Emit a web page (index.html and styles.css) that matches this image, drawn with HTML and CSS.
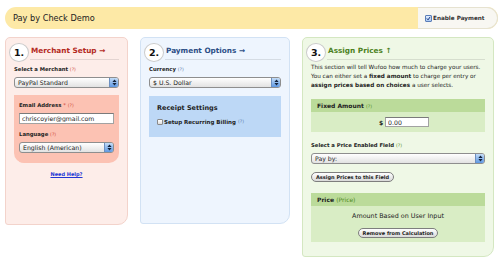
FILE: index.html
```html
<!DOCTYPE html>
<html lang="en">
<head>
    <meta charset="UTF-8">
    <title>Pay by Check Demo</title>
    <link rel="stylesheet" href="styles.css">
</head>
<body>
    <div class="topbar">
        <div class="topbar-title">Pay by Check Demo</div>
        <label class="topbar-toggle">
            <span class="check check-on"><svg viewBox="0 0 7 7"><path d="M1.2 3.5 L2.9 5.4 L5.9 1.1" /></svg></span>
            Enable Payment
        </label>
    </div>

    <div class="steps">
        <!-- step 1 -->
        <div class="panel panel-merchant">
            <div class="panel-head">
                <span class="badge">1.</span>
                <h2 class="panel-title">Merchant Setup →</h2>
            </div>
            <label class="field-label">Select a Merchant <span class="help">(?)</span></label>
            <div class="select">
                <span class="select-value">PayPal Standard</span>
                <span class="select-arrow"><svg viewBox="0 0 9 9"><path d="M4.5 1.4 L6.6 3.9 L2.4 3.9 Z M2.4 5.1 L6.6 5.1 L4.5 7.6 Z" /></svg></span>
            </div>
            <div class="subbox">
                <label class="field-label">Email Address <span class="req">*</span> <span class="help">(?)</span></label>
                <input class="input" type="text" value="chriscoyier@gmail.com">
                <label class="field-label field-gap">Language <span class="help">(?)</span></label>
                <div class="select">
                    <span class="select-value">English (American)</span>
                    <span class="select-arrow"><svg viewBox="0 0 9 9"><path d="M4.5 1.4 L6.6 3.9 L2.4 3.9 Z M2.4 5.1 L6.6 5.1 L4.5 7.6 Z" /></svg></span>
                </div>
            </div>
            <a href="#" class="need-help">Need Help?</a>
        </div>

        <!-- step 2 -->
        <div class="panel panel-payment">
            <div class="panel-head">
                <span class="badge">2.</span>
                <h2 class="panel-title">Payment Options →</h2>
            </div>
            <label class="field-label">Currency <span class="help">(?)</span></label>
            <div class="select">
                <span class="select-value">$ U.S. Dollar</span>
                <span class="select-arrow"><svg viewBox="0 0 9 9"><path d="M4.5 1.4 L6.6 3.9 L2.4 3.9 Z M2.4 5.1 L6.6 5.1 L4.5 7.6 Z" /></svg></span>
            </div>
            <div class="subbox">
                <div class="subbox-title">Receipt Settings</div>
                <label class="checkrow">
                    <span class="check"></span>
                    Setup Recurring Billing <span class="help">(?)</span>
                </label>
            </div>
        </div>

        <!-- step 3 -->
        <div class="panel panel-prices">
            <div class="panel-head">
                <span class="badge">3.</span>
                <h2 class="panel-title">Assign Prices ↑</h2>
            </div>
            <p class="intro">
                This section will tell Wufoo how much to charge your users.<br>
                You can either set a <b>fixed amount</b> to charge per entry or<br>
                <b>assign prices based on choices</b> a user selects.
            </p>
            <div class="pricebox">
                <div class="pricebox-head">Fixed Amount <span class="help">(?)</span></div>
                <div class="pricebox-body fixed-body">
                    <span class="currency">$</span>
                    <input class="input amount" type="text" value="0.00">
                </div>
            </div>
            <label class="field-label price-field">Select a Price Enabled Field <span class="help">(?)</span></label>
            <div class="select">
                <span class="select-value">Pay by:</span>
                <span class="select-arrow"><svg viewBox="0 0 9 9"><path d="M4.5 1.4 L6.6 3.9 L2.4 3.9 Z M2.4 5.1 L6.6 5.1 L4.5 7.6 Z" /></svg></span>
            </div>
            <button class="btn assign-btn">Assign Prices to this Field</button>
            <div class="pricebox price-list">
                <div class="pricebox-head">Price <span class="muted">(Price)</span></div>
                <div class="pricebox-body">
                    <div class="amount-note">Amount Based on User Input</div>
                    <button class="btn">Remove from Calculation</button>
                </div>
            </div>
        </div>
    </div>
</body>
</html>
```

FILE: styles.css
```css
* {
    margin: 0;
    padding: 0;
    box-sizing: border-box;
}

body {
    background: #fff;
    color: #222;
    font-family: "DejaVu Sans", "Liberation Sans", sans-serif;
}

/* top bar */
.topbar {
    display: flex;
    height: 22px;
    margin: 7px 2px 0 5px;
    background: #fde9a6;
    border-radius: 11px;
}

.topbar-title {
    flex: 1;
    display: flex;
    align-items: center;
    padding-left: 8px;
    font-size: 8.2px;
}

.topbar-toggle {
    width: 80px;
    display: flex;
    align-items: center;
    gap: 1px;
    padding-left: 7px;
    background: #f8f7f2;
    border: 1px solid #e6e2d0;
    border-left: 0;
    border-radius: 0 11px 11px 0;
    font-size: 5.7px;
    font-weight: bold;
    color: #333;
}

/* checkboxes */
.check {
    display: inline-block;
    width: 6px;
    height: 6px;
    border: 1px solid #8a8a8a;
    border-radius: 1px;
    background: linear-gradient(#fff, #dcdcdc);
    flex-shrink: 0;
}

.check-on {
    width: 7px;
    height: 7px;
    border-color: #5a7db8;
    background: linear-gradient(#e4efff, #a9c7f0);
}

.check-on svg {
    display: block;
    width: 100%;
    height: 100%;
}

.check-on path {
    fill: none;
    stroke: #1b3b85;
    stroke-width: 1.4;
}

/* step panels */
.steps {
    display: flex;
    align-items: flex-start;
    gap: 12px;
    margin: 8px 0 0 5px;
}

.panel {
    border: 1px solid;
    border-radius: 5px 5px 10px 3px;
    padding: 0 8px;
}

.panel-merchant {
    width: 123px;
    height: 188px;
    background: #fdede9;
    border-color: #f3d3cb;
}

.panel-payment {
    width: 150px;
    height: 187px;
    background: #eef5fe;
    border-color: #d2e2f4;
}

.panel-prices {
    width: 192px;
    padding-bottom: 14px;
    background: #eff8e6;
    border-color: #d4e7c1;
}

.panel-head {
    display: flex;
    align-items: flex-end;
    margin: 5px 0 0 -5px;
}

.badge {
    width: 20px;
    height: 19px;
    display: flex;
    align-items: center;
    justify-content: center;
    flex-shrink: 0;
    background: #fff;
    border: 1px solid #cbcbcb;
    border-radius: 50%;
    font-size: 9.5px;
    font-weight: bold;
    color: #111;
}

.panel-title {
    flex: 1;
    margin: 0 0 2px 1px;
    padding: 0 0 4px 1px;
    border-bottom: 1px solid rgba(0, 0, 0, 0.1);
    font-size: 7.3px;
    line-height: 9px;
    font-weight: bold;
}

.panel-merchant .panel-title { color: #b42a1e; }
.panel-payment .panel-title { color: #2d4f86; }
.panel-prices .panel-title { color: #4b8121; }

.panel-merchant .help, .req { color: #cf4a3a; }
.panel-payment .help { color: #5878ad; }
.panel-prices .help, .muted { color: #4f8a22; }

/* form bits */
.field-label {
    display: block;
    margin-top: 4px;
    font-size: 5.3px;
    line-height: 7px;
    font-weight: bold;
}

.subbox .field-label:first-child {
    margin-top: 0;
}

.field-label.field-gap {
    margin-top: 7px;
}

.help {
    font-weight: normal;
    font-size: 4.6px;
}

.req {
    font-weight: normal;
}

.select {
    display: flex;
    height: 11px;
    margin-top: 4px;
    border: 1px solid #8e8e8e;
    border-radius: 3px;
    background: linear-gradient(#fff, #e2e2e2);
    overflow: hidden;
}

.select-value {
    flex: 1;
    padding-left: 3px;
    font-size: 6.2px;
    line-height: 9px;
}

.select-arrow {
    width: 9px;
    border-left: 1px solid #6c8fc0;
    background: linear-gradient(#c3dcf8, #5e98e2);
}

.select-arrow svg {
    display: block;
    width: 9px;
    height: 9px;
}

.select-arrow path {
    fill: #14243d;
}

.input {
    display: block;
    width: 100%;
    height: 11px;
    margin-top: 4px;
    padding-left: 2px;
    border: 1px solid #a2a2a2;
    border-top-color: #7a7a7a;
    background: #fff;
    font-family: inherit;
    font-size: 6.2px;
    line-height: 9px;
    color: #222;
    outline: none;
}

.subbox {
    margin-top: 7px;
    padding: 7px 5px 10px;
    background: #fcc2b3;
    border-radius: 0 0 10px 10px;
}

.panel-payment .subbox {
    margin-top: 8px;
    padding: 9px 8px 11px;
    background: #bdd8f6;
    border-radius: 0;
}

.subbox-title {
    font-size: 6.5px;
    line-height: 7px;
    font-weight: bold;
}

.checkrow {
    display: flex;
    align-items: center;
    gap: 1px;
    margin-top: 6px;
    font-size: 5.5px;
    line-height: 8px;
    font-weight: bold;
}

.checkrow .help {
    margin-left: 1px;
}

.need-help {
    display: block;
    margin-top: 8px;
    text-align: center;
    font-size: 5px;
    line-height: 7px;
    font-weight: bold;
    color: #2236d4;
}

/* prices */
.intro {
    margin-top: 1px;
    font-size: 5.7px;
    line-height: 9px;
}

.pricebox {
    margin-top: 9px;
    background: #d9edc5;
}

.pricebox-head {
    height: 13px;
    padding-left: 6px;
    background: #bbdb9a;
    font-size: 6px;
    line-height: 13px;
    font-weight: bold;
}

.pricebox-head .muted {
    font-weight: normal;
}

.pricebox-body {
    display: flex;
    flex-direction: column;
    align-items: center;
    padding: 6px 0 4px;
}

.fixed-body {
    flex-direction: row;
    justify-content: center;
    gap: 2px;
    padding: 5px 0 5px 12px;
}

.currency {
    font-size: 6px;
    font-weight: bold;
}

.input.amount {
    width: 44px;
    height: 10px;
    margin-top: 0;
}

.price-field {
    margin-top: 10px;
}

.btn {
    display: block;
    height: 10px;
    padding: 0 4px;
    border: 1px solid #7e7e7e;
    border-radius: 5px;
    background: linear-gradient(#fff, #d9d9d9);
    font-family: inherit;
    font-size: 5px;
    line-height: 8px;
    font-weight: bold;
    color: #222;
}

.assign-btn {
    margin-top: 8px;
}

.price-list {
    margin-top: 11px;
}

.amount-note {
    font-size: 6.4px;
    line-height: 8px;
}

.price-list .btn {
    margin-top: 8px;
}
```
